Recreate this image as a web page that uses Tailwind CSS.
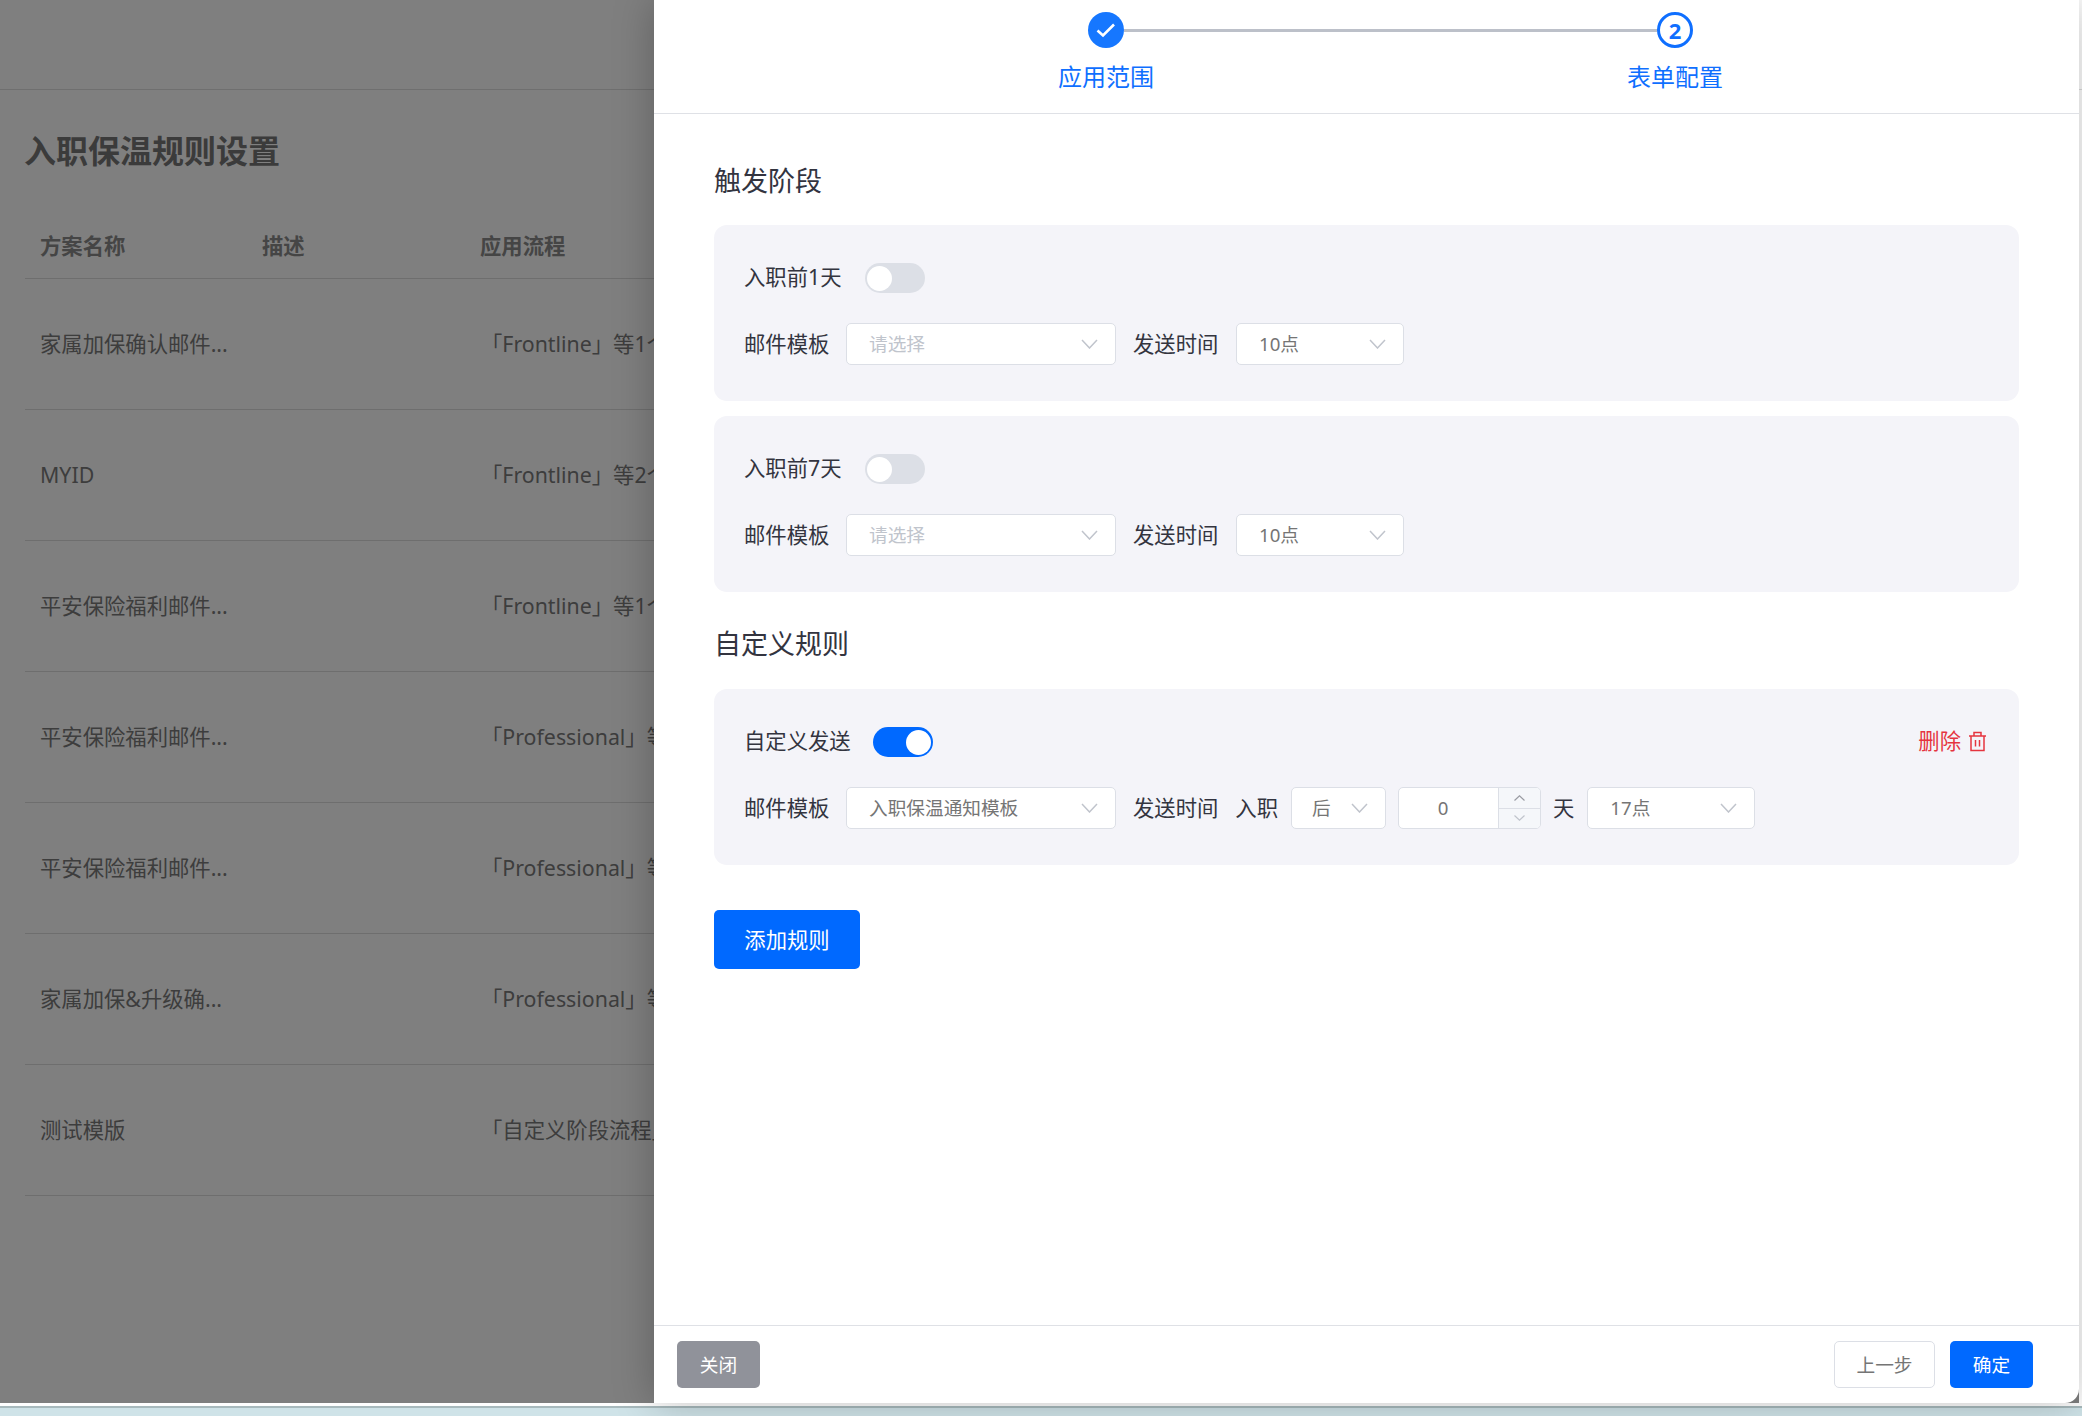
<!DOCTYPE html>
<html lang="zh-CN">
<head>
  <meta charset="UTF-8">
  <meta name="viewport" content="width=device-width, initial-scale=1.0">
  <title>入职保温规则设置</title>
  <script src="https://cdn.jsdelivr.net/npm/@tailwindcss/browser@4"></script>
</head>
<body class="relative h-[1416px] w-[2082px] overflow-hidden bg-[#cfe3e8] font-['Noto_Sans','Noto_Sans_CJK_SC',sans-serif]">
  <!-- Page behind the drawer -->
  <div class="relative h-[1408px] border-b-2 border-[#a8babd] bg-white">
    <div class="h-[90px] border-b border-[#dedede]"></div>
    <h1 class="ml-[24px] mt-[40px] text-[32px] font-bold leading-[42px] text-[#777]">入职保温规则设置</h1>
    <div class="ml-[25px] mt-[35px] w-[800px]">
      <div class="flex h-[72px] items-center border-b border-[#dcdcdc] pt-[6px] text-[21.33px] font-bold text-[#8a8a8a]">
        <span class="ml-[15px] w-[222px]">方案名称</span>
        <span class="w-[218px]">描述</span>
        <span>应用流程</span>
      </div>
      <div class="flex h-[131px] items-center border-b border-[#dcdcdc] text-[21.33px] text-[#7a7a7a]">
        <span class="ml-[15px] w-[441px]">家属加保确认邮件...</span><span>「Frontline」等1个流程</span>
      </div>
      <div class="flex h-[131px] items-center border-b border-[#dcdcdc] text-[21.33px] text-[#7a7a7a]">
        <span class="ml-[15px] w-[441px]">MYID</span><span>「Frontline」等2个流程</span>
      </div>
      <div class="flex h-[131px] items-center border-b border-[#dcdcdc] text-[21.33px] text-[#7a7a7a]">
        <span class="ml-[15px] w-[441px]">平安保险福利邮件...</span><span>「Frontline」等1个流程</span>
      </div>
      <div class="flex h-[131px] items-center border-b border-[#dcdcdc] text-[21.33px] text-[#7a7a7a]">
        <span class="ml-[15px] w-[441px]">平安保险福利邮件...</span><span>「Professional」等1个流程</span>
      </div>
      <div class="flex h-[131px] items-center border-b border-[#dcdcdc] text-[21.33px] text-[#7a7a7a]">
        <span class="ml-[15px] w-[441px]">平安保险福利邮件...</span><span>「Professional」等1个流程</span>
      </div>
      <div class="flex h-[131px] items-center border-b border-[#dcdcdc] text-[21.33px] text-[#7a7a7a]">
        <span class="ml-[15px] w-[441px]">家属加保&amp;升级确...</span><span>「Professional」等1个流程</span>
      </div>
      <div class="flex h-[131px] items-center border-b border-[#dcdcdc] text-[21.33px] text-[#7a7a7a]">
        <span class="ml-[15px] w-[441px]">测试模版</span><span>「自定义阶段流程」</span>
      </div>
    </div>
  </div>

  <!-- Mask -->
  <div class="absolute left-0 top-0 h-[1403px] w-[2079px] bg-black/50"></div>

  <!-- Drawer -->
  <div class="absolute left-[654px] top-0 flex h-[1403px] w-[1425px] flex-col rounded-br-[14px] bg-white shadow-[0_0_40px_rgba(0,0,0,0.25)]">
    <!-- Steps -->
    <div class="h-[114px] shrink-0 border-b border-[#dfe1e6]">
      <div class="ml-[434px] mt-[12px] flex items-center">
        <div class="flex h-[36px] w-[36px] items-center justify-center rounded-full bg-[#1677ff]">
          <svg class="h-[20px] w-[20px]" viewBox="0 0 20 20" fill="none" stroke="#fff" stroke-width="2.6"><path d="M1.5 10.5 7 15.5 18 4.5"/></svg>
        </div>
        <div class="h-[3px] w-[533px] bg-[#bcc0c9]"></div>
        <div class="flex h-[36px] w-[36px] items-center justify-center rounded-full border-[3px] border-[#0f6fff] text-[22px] font-bold leading-none text-[#0f6fff]">2</div>
      </div>
      <div class="ml-[404px] mt-[13px] flex gap-[473px] text-[24px] leading-[32px] text-[#0f6fff]">
        <span class="w-[96px]">应用范围</span>
        <span class="w-[96px]">表单配置</span>
      </div>
    </div>

    <!-- Form -->
    <div class="flex-1 px-[60px]">
      <h2 class="mt-[49px] text-[27px] font-normal leading-[36px] text-[#33343f]">触发阶段</h2>

      <div class="mt-[26px] h-[176px] rounded-[13px] bg-[#f4f4f9] px-[30px] pt-[38px] text-[21.33px] text-[#33343f]">
        <div class="flex h-[30px] items-center">
          <span class="w-[121px] pb-[2px] leading-[30px]">入职前1天</span>
          <div class="flex h-[30px] w-[60px] items-center rounded-full bg-[#dcdfe6] pl-[2px]"><div class="h-[25px] w-[25px] rounded-full bg-white"></div></div>
        </div>
        <div class="mt-[30px] flex h-[42px] items-center">
          <span class="w-[102px]">邮件模板</span>
          <div class="flex h-[42px] w-[270px] items-center justify-between rounded-[5px] border-[1.5px] border-[#dcdfe6] bg-white pl-[22px] pr-[17px] text-[18.67px] text-[#c0c4cc]">
            <span>请选择</span>
            <svg class="h-[10px] w-[17px]" viewBox="0 0 17 10" fill="none" stroke="#c0c4cc" stroke-width="1.5"><path d="M1 1 8.5 9 16 1"/></svg>
          </div>
          <span class="ml-[17px] w-[103px]">发送时间</span>
          <div class="flex h-[42px] w-[168px] items-center justify-between rounded-[5px] border-[1.5px] border-[#dcdfe6] bg-white pl-[22px] pr-[17px] text-[18.67px] text-[#757575]">
            <span>10点</span>
            <svg class="h-[10px] w-[17px]" viewBox="0 0 17 10" fill="none" stroke="#c0c4cc" stroke-width="1.5"><path d="M1 1 8.5 9 16 1"/></svg>
          </div>
        </div>
      </div>

      <div class="mt-[15px] h-[176px] rounded-[13px] bg-[#f4f4f9] px-[30px] pt-[38px] text-[21.33px] text-[#33343f]">
        <div class="flex h-[30px] items-center">
          <span class="w-[121px] pb-[2px] leading-[30px]">入职前7天</span>
          <div class="flex h-[30px] w-[60px] items-center rounded-full bg-[#dcdfe6] pl-[2px]"><div class="h-[25px] w-[25px] rounded-full bg-white"></div></div>
        </div>
        <div class="mt-[30px] flex h-[42px] items-center">
          <span class="w-[102px]">邮件模板</span>
          <div class="flex h-[42px] w-[270px] items-center justify-between rounded-[5px] border-[1.5px] border-[#dcdfe6] bg-white pl-[22px] pr-[17px] text-[18.67px] text-[#c0c4cc]">
            <span>请选择</span>
            <svg class="h-[10px] w-[17px]" viewBox="0 0 17 10" fill="none" stroke="#c0c4cc" stroke-width="1.5"><path d="M1 1 8.5 9 16 1"/></svg>
          </div>
          <span class="ml-[17px] w-[103px]">发送时间</span>
          <div class="flex h-[42px] w-[168px] items-center justify-between rounded-[5px] border-[1.5px] border-[#dcdfe6] bg-white pl-[22px] pr-[17px] text-[18.67px] text-[#757575]">
            <span>10点</span>
            <svg class="h-[10px] w-[17px]" viewBox="0 0 17 10" fill="none" stroke="#c0c4cc" stroke-width="1.5"><path d="M1 1 8.5 9 16 1"/></svg>
          </div>
        </div>
      </div>

      <h2 class="mt-[34px] text-[27px] font-normal leading-[36px] text-[#33343f]">自定义规则</h2>

      <div class="mt-[27px] h-[176px] rounded-[13px] bg-[#f4f4f9] px-[30px] pt-[38px] text-[21.33px] text-[#33343f]">
        <div class="flex h-[30px] items-center">
          <span class="w-[129px] pb-[2px] leading-[30px]">自定义发送</span>
          <div class="flex h-[30px] w-[60px] items-center justify-end rounded-full bg-[#0069ff] pr-[2px]"><div class="h-[25px] w-[25px] rounded-full bg-white"></div></div>
          <div class="ml-auto mr-[2px] flex items-center gap-[7px] text-[#e5343f]">
            <span class="pb-[2px] leading-[30px]">删除</span>
            <svg class="mb-[2px] h-[21px] w-[19px]" viewBox="0 0 19 21" fill="none" stroke="#e5343f" stroke-width="1.5"><path d="M1 5h17M6 5V1.5h7V5M3 5V19.5h13V5M7.5 9v6.5M11.5 9v6.5"/></svg>
          </div>
        </div>
        <div class="mt-[30px] flex h-[42px] items-center">
          <span class="w-[102px]">邮件模板</span>
          <div class="flex h-[42px] w-[270px] items-center justify-between rounded-[5px] border-[1.5px] border-[#dcdfe6] bg-white pl-[22px] pr-[17px] text-[18.67px] text-[#757575]">
            <span>入职保温通知模板</span>
            <svg class="h-[10px] w-[17px]" viewBox="0 0 17 10" fill="none" stroke="#c0c4cc" stroke-width="1.5"><path d="M1 1 8.5 9 16 1"/></svg>
          </div>
          <span class="ml-[17px]">发送时间</span>
          <span class="ml-[17px]">入职</span>
          <div class="ml-[13px] flex h-[42px] w-[95px] items-center justify-between rounded-[5px] border-[1.5px] border-[#dcdfe6] bg-white pl-[20px] pr-[17px] text-[18.67px] text-[#757575]">
            <span>后</span>
            <svg class="h-[10px] w-[17px]" viewBox="0 0 17 10" fill="none" stroke="#c0c4cc" stroke-width="1.5"><path d="M1 1 8.5 9 16 1"/></svg>
          </div>
          <div class="ml-[12px] flex h-[42px] w-[143px] overflow-hidden rounded-[5px] border-[1.5px] border-[#dcdfe6] bg-white text-[18.67px] text-[#757575]">
            <span class="flex flex-1 items-center justify-center pr-[11px]">0</span>
            <div class="flex w-[42px] flex-col border-l-[1.5px] border-[#dcdfe6] bg-[#f5f7fa]">
              <div class="flex flex-1 items-center justify-center border-b-[1.5px] border-[#dcdfe6]">
                <svg class="h-[6px] w-[11px]" viewBox="0 0 11 6" fill="none" stroke="#9a9ca3" stroke-width="1.2"><path d="M.5 5.5 5.5.8l5 4.7"/></svg>
              </div>
              <div class="flex flex-1 items-center justify-center">
                <svg class="h-[6px] w-[11px]" viewBox="0 0 11 6" fill="none" stroke="#c0c4cc" stroke-width="1.2"><path d="M.5.5l5 4.7 5-4.7"/></svg>
              </div>
            </div>
          </div>
          <span class="ml-[12px]">天</span>
          <div class="ml-[13px] flex h-[42px] w-[168px] items-center justify-between rounded-[5px] border-[1.5px] border-[#dcdfe6] bg-white pl-[22px] pr-[17px] text-[18.67px] text-[#757575]">
            <span>17点</span>
            <svg class="h-[10px] w-[17px]" viewBox="0 0 17 10" fill="none" stroke="#c0c4cc" stroke-width="1.5"><path d="M1 1 8.5 9 16 1"/></svg>
          </div>
        </div>
      </div>

      <button class="mt-[45px] h-[59px] w-[146px] rounded-[5px] bg-[#0069ff] text-[21.33px] text-white">添加规则</button>
    </div>

    <!-- Footer -->
    <div class="flex h-[78px] shrink-0 items-start border-t border-[#dfe1e6] pl-[23px] pr-[46px] pt-[15px] text-[18.67px]">
      <button class="h-[47px] w-[83px] rounded-[5px] bg-[#90929a] text-white">关闭</button>
      <button class="ml-auto h-[47px] w-[101px] rounded-[5px] border-[1.5px] border-[#dcdfe6] bg-white text-[#757575]">上一步</button>
      <button class="ml-[15px] h-[47px] w-[83px] rounded-[5px] bg-[#0069ff] text-white">确定</button>
    </div>
  </div>
</body>
</html>
